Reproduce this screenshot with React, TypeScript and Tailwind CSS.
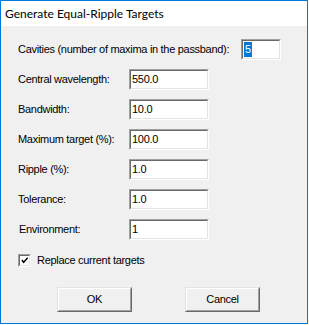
const fields = [
  { label: 'Central wavelength:', value: '550.0' },
  { label: 'Bandwidth:', value: '10.0' },
  { label: 'Maximum target (%):', value: '100.0' },
  { label: 'Ripple (%):', value: '1.0' },
  { label: 'Tolerance:', value: '1.0' },
  { label: 'Environment:', value: '1', indent: true },
];

function Sunken({ className, children }: { className: string; children: React.ReactNode }) {
  return (
    <div className={`${className} border border-[#a0a0a0] border-b-white border-r-white`}>
      <div className="h-full border border-[#696969] border-b-[#e3e3e3] border-r-[#e3e3e3] bg-white flex items-center">
        {children}
      </div>
    </div>
  );
}

function Field({ value, width, selected }: { value: string; width: string; selected?: boolean }) {
  return (
    <Sunken className={`${width} h-[21px]`}>
      <span className={`ml-[1px] leading-[15px] ${selected ? 'bg-[#0078d7] text-white px-[1px]' : ''}`}>{value}</span>
    </Sunken>
  );
}

function Button({ label }: { label: string }) {
  return (
    <div className="w-[75px] h-[25px] border border-[#e3e3e3] border-b-[#696969] border-r-[#696969]">
      <div className="h-full border border-white border-b-[#a0a0a0] border-r-[#a0a0a0] bg-[#f0f0f0] flex items-center justify-center">
        {label}
      </div>
    </div>
  );
}

export default function App() {
  return (
    <div className="w-[309px] h-[325px] bg-white">
      <div
        className="w-[308px] h-[324px] border border-[#0078d7] flex flex-col text-[11px] tracking-[-0.3px] text-black"
        style={{ fontFamily: '"Liberation Sans", Arial, sans-serif' }}
      >
        {/* title bar */}
        <div
          className="h-[25px] bg-white flex items-center pl-[4px] text-[12px] tracking-normal text-black"
          style={{ fontFamily: 'Lato, "Open Sans", sans-serif' }}
        >
          Generate Equal-Ripple Targets
        </div>

        {/* body */}
        <div className="flex-1 bg-[#f0f0f0] pt-[13px] pl-[17px] flex flex-col">
          <div className="flex flex-col gap-[9px]">
            <div className="flex items-center h-[21px]">
              <div className="w-[223px] whitespace-nowrap">Cavities (number of maxima in the passband):</div>
              <Field value="5" width="w-[40px]" selected />
            </div>
            {fields.map((f) => (
              <div key={f.label} className="flex items-center h-[21px]">
                <div className={`w-[111px] whitespace-nowrap ${f.indent ? 'pl-[1px]' : ''}`}>{f.label}</div>
                <Field value={f.value} width="w-[80px]" />
              </div>
            ))}
          </div>

          {/* checkbox */}
          <div className="flex items-center mt-[14px] h-[13px]">
            <Sunken className="w-[13px] h-[13px] shrink-0">
              <svg width="9" height="9" viewBox="0 0 9 9" className="ml-[1px]">
                <path d="M1 4 L3 6.5 L7.5 1.5" stroke="#000" strokeWidth="1.6" fill="none" />
              </svg>
            </Sunken>
            <span className="ml-[6px]">Replace current targets</span>
          </div>

          {/* buttons */}
          <div className="flex mt-[20px] pl-[39px] gap-[53px]">
            <Button label="OK" />
            <Button label="Cancel" />
          </div>
        </div>
      </div>
    </div>
  );
}
